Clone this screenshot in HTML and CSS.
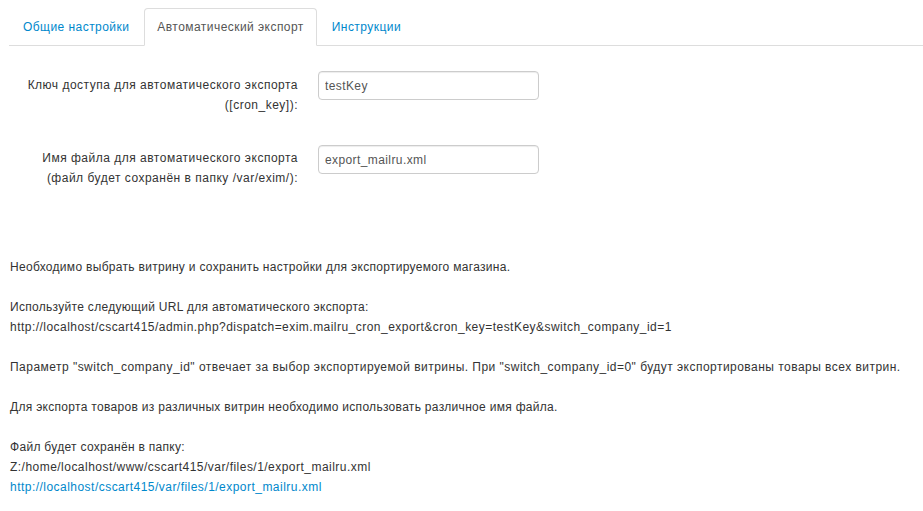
FILE: index.html
```html
<!DOCTYPE html>
<html lang="ru">
<head>
<meta charset="utf-8">
<link rel="stylesheet" href="styles.css">
</head>
<body>
<div class="page">
  <ul class="tabs">
    <li class="tab"><a href="#">Общие настройки</a></li>
    <li class="tab active"><a href="#">Автоматический экспорт</a></li>
    <li class="tab"><a href="#">Инструкции</a></li>
  </ul>
  <div class="form">
    <div class="row">
      <label class="label">Ключ доступа для автоматического экспорта<br>([cron_key]):</label>
      <div class="control"><input class="input" type="text" value="testKey"></div>
    </div>
    <div class="row">
      <label class="label">Имя файла для автоматического экспорта<br>(файл будет сохранён в папку /var/exim/):</label>
      <div class="control"><input class="input" type="text" value="export_mailru.xml"></div>
    </div>
  </div>
  <div class="info">
    <p>Необходимо выбрать витрину и сохранить настройки для экспортируемого магазина.</p>
    <p>Используйте следующий URL для автоматического экспорта:<br><span class="wide">http://localhost/cscart415/admin.php?dispatch=exim.mailru_cron_export&amp;cron_key=testKey&amp;switch_company_id=1</span></p>
    <p class="wide">Параметр "switch_company_id" отвечает за выбор экспортируемой витрины. При "switch_company_id=0" будут экспортированы товары всех витрин.</p>
    <p>Для экспорта товаров из различных витрин необходимо использовать различное имя файла.</p>
    <p>Файл будет сохранён в папку:<br><span class="wide">Z:/home/localhost/www/cscart415/var/files/1/export_mailru.xml</span><br><a class="wide" href="#">http://localhost/cscart415/var/files/1/export_mailru.xml</a></p>
  </div>
</div>
</body>
</html>
```

FILE: styles.css
```css
html, body {
  margin: 0;
  padding: 0;
  background: #fff;
}
body {
  font-family: "Liberation Sans", Arial, sans-serif;
  font-size: 12px;
  line-height: 20px;
  color: #333;
  letter-spacing: 0.3px;
}
.page {
  padding: 8px 0 0 9px;
}
.tabs {
  list-style: none;
  margin: 0;
  padding: 0 0 0 1px;
  display: flex;
  border-bottom: 1px solid #ddd;
  letter-spacing: 0.45px;
}
.tab {
  margin-right: 2px;
  margin-bottom: -1px;
}
.tab a {
  display: block;
  padding: 8px 12px;
  line-height: 20px;
  border: 1px solid transparent;
  border-radius: 4px 4px 0 0;
  color: #0088cc;
  text-decoration: none;
}
.tab.active a {
  color: #555;
  background: #fff;
  border-color: #ddd #ddd transparent;
}
.form {
  padding-top: 25px;
}
.row {
  display: flex;
  align-items: flex-start;
  margin-bottom: 30px;
}
.row + .row {
  margin-bottom: 0;
}
.label {
  width: 289px;
  text-align: right;
  padding-top: 4px;
  line-height: 20px;
  letter-spacing: 0.5px;
}
.row + .row .label {
  padding-top: 3px;
}
.control {
  margin-left: 20px;
}
.input {
  box-sizing: border-box;
  width: 221px;
  height: 29px;
  padding: 4px 6px;
  border: 1px solid #ccc;
  border-radius: 4px;
  font-family: "Liberation Sans", Arial, sans-serif;
  font-size: 12px;
  letter-spacing: 0.4px;
  color: #555;
  box-shadow: inset 0 1px 1px rgba(0,0,0,0.075);
  margin: 0;
}
.info {
  padding-top: 69px;
  padding-left: 1px;
}
.info p {
  margin: 0 0 20px;
}
.info .wide {
  letter-spacing: 0.47px;
}
.info a {
  color: #0088cc;
  text-decoration: none;
}
```
